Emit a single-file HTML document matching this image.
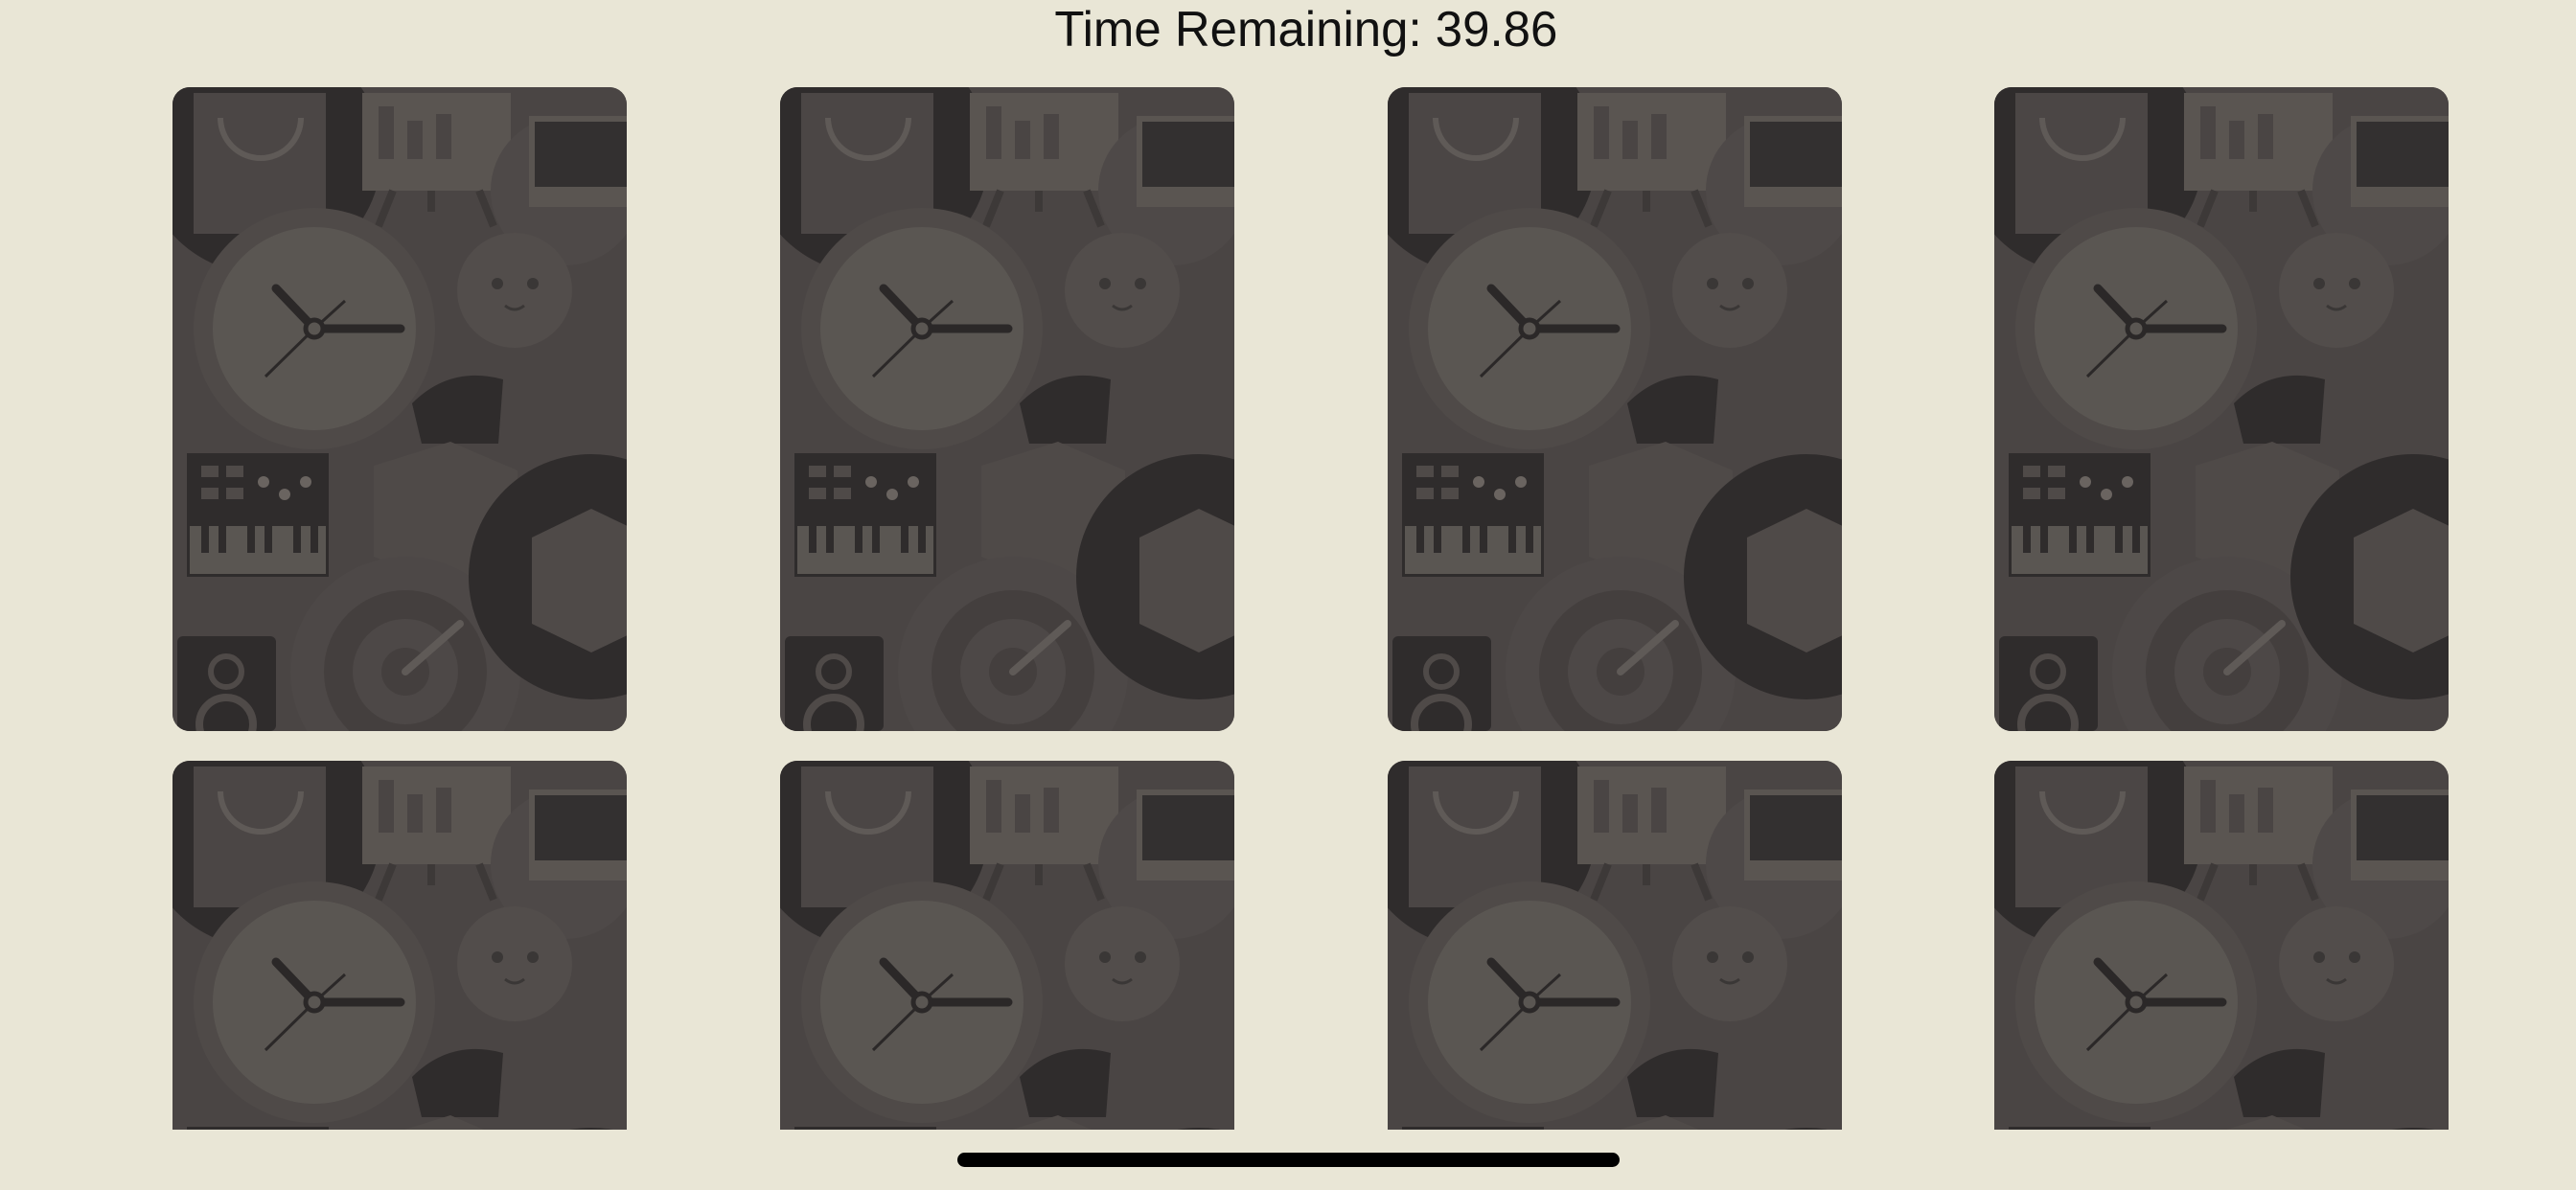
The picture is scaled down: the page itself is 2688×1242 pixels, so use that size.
<!DOCTYPE html>
<html><head><meta charset="utf-8"><style>
html,body{margin:0;padding:0;width:2688px;height:1242px;overflow:hidden;background:#e9e6d6;}
.t{position:absolute;left:19px;width:2688px;top:0;height:62px;overflow:hidden;text-align:center;font-family:"Liberation Sans",sans-serif;font-size:52px;line-height:62px;color:#111;}
.t span{display:inline-block;transform:scaleX(0.98);}
.c{position:absolute;width:474px;overflow:hidden;background:#4a4544;}
.r1{top:91px;height:672px;border-radius:18px;}
.r2{top:794px;height:385px;border-radius:18px 18px 0 0;}
.c svg{display:block;}
.bar{position:absolute;left:999px;top:1203px;width:691px;height:15px;border-radius:8px;background:#000;}
</style></head><body>
<svg width="0" height="0" style="position:absolute;top:0;left:0">
<defs>
<symbol id="card" viewBox="0 0 474 672">
<rect width="474" height="672" fill="#4a4544"/>
<circle cx="93" cy="70" r="125" fill="#2f2c2c"/>
<rect x="22" y="6" width="138" height="147" fill="#4b4645"/>
<path d="M50 32 A42 42 0 0 0 134 32" fill="none" stroke="#5f5a57" stroke-width="6"/>
<rect x="198" y="6" width="155" height="102" fill="#5a5551"/>
<rect x="215" y="20" width="16" height="55" fill="#4a4544"/><rect x="245" y="35" width="16" height="40" fill="#4a4544"/><rect x="275" y="28" width="16" height="47" fill="#4a4544"/>
<path d="M230 108 L215 145 M270 108 L270 130 M320 108 L335 145" stroke="#3d3938" stroke-width="8"/>
<circle cx="410" cy="108" r="78" fill="#4e4948"/>
<rect x="372" y="30" width="110" height="95" fill="#5a5551"/>
<rect x="378" y="36" width="100" height="68" fill="#333030"/>
<circle cx="357" cy="212" r="60" fill="#524d4b"/>
<circle cx="339" cy="205" r="6" fill="#3a3736"/><circle cx="376" cy="205" r="6" fill="#3a3736"/>
<path d="M347 228 Q357 236 367 228" stroke="#3a3736" stroke-width="3" fill="none"/>
<path d="M250 330 Q290 290 345 305 L340 372 L260 372 Z" fill="#2f2c2c"/>
<circle cx="148" cy="252" r="126" fill="#4f4a48"/>
<circle cx="148" cy="252" r="106" fill="#5a5652"/>
<path d="M148 252 L108 210 M148 252 L238 252" stroke="#2b2828" stroke-width="9" stroke-linecap="round"/>
<path d="M97 302 L148 252 L180 223" stroke="#2b2828" stroke-width="3"/>
<circle cx="148" cy="252" r="9" fill="#5a5652" stroke="#2b2828" stroke-width="5"/>
<path d="M210 395 L290 370 L360 400 L360 490 L280 520 L210 490 Z" fill="#4f4a48"/>
<rect x="15" y="382" width="148" height="129" fill="#2f2c2c"/>
<rect x="18" y="458" width="142" height="50" fill="#5a5652"/>
<g fill="#2f2c2c"><rect x="30" y="458" width="8" height="28"/><rect x="48" y="458" width="8" height="28"/><rect x="78" y="458" width="8" height="28"/><rect x="96" y="458" width="8" height="28"/><rect x="126" y="458" width="8" height="28"/><rect x="144" y="458" width="8" height="28"/></g>
<g fill="#4f4a48"><rect x="30" y="395" width="18" height="12"/><rect x="56" y="395" width="18" height="12"/><rect x="30" y="418" width="18" height="12"/><rect x="56" y="418" width="18" height="12"/></g>
<g fill="#6a6460"><circle cx="95" cy="412" r="6"/><circle cx="117" cy="425" r="6"/><circle cx="139" cy="412" r="6"/></g>
<circle cx="243" cy="610" r="120" fill="#4d4847"/>
<circle cx="243" cy="610" r="85" fill="#443f3e"/>
<circle cx="243" cy="610" r="55" fill="#4d4847"/>
<circle cx="243" cy="610" r="25" fill="#443f3e"/>
<path d="M243 610 L300 560" stroke="#5f5a57" stroke-width="8" stroke-linecap="round"/>
<circle cx="437" cy="511" r="128" fill="#2f2c2c"/>
<path d="M437 440 L500 470 L500 560 L437 590 L375 560 L375 470 Z" fill="#4f4a48"/>
<rect x="5" y="573" width="103" height="99" rx="6" fill="#2f2c2c"/>
<circle cx="56" cy="610" r="16" fill="none" stroke="#4f4a48" stroke-width="6"/>
<circle cx="56" cy="665" r="28" fill="none" stroke="#4f4a48" stroke-width="8"/>
</symbol>
</defs></svg>
<div class="t"><span>Time Remaining: 39.86</span></div>
<div class="c r1" style="left:180px"><svg width="474" height="672" viewBox="0 0 474 672"><use href="#card"/></svg></div>
<div class="c r1" style="left:814px"><svg width="474" height="672" viewBox="0 0 474 672"><use href="#card"/></svg></div>
<div class="c r1" style="left:1448px"><svg width="474" height="672" viewBox="0 0 474 672"><use href="#card"/></svg></div>
<div class="c r1" style="left:2081px"><svg width="474" height="672" viewBox="0 0 474 672"><use href="#card"/></svg></div>
<div class="c r2" style="left:180px"><svg width="474" height="385" viewBox="0 0 474 385"><use href="#card" width="474" height="672"/></svg></div>
<div class="c r2" style="left:814px"><svg width="474" height="385" viewBox="0 0 474 385"><use href="#card" width="474" height="672"/></svg></div>
<div class="c r2" style="left:1448px"><svg width="474" height="385" viewBox="0 0 474 385"><use href="#card" width="474" height="672"/></svg></div>
<div class="c r2" style="left:2081px"><svg width="474" height="385" viewBox="0 0 474 385"><use href="#card" width="474" height="672"/></svg></div>
<div class="bar"></div>
</body></html>
